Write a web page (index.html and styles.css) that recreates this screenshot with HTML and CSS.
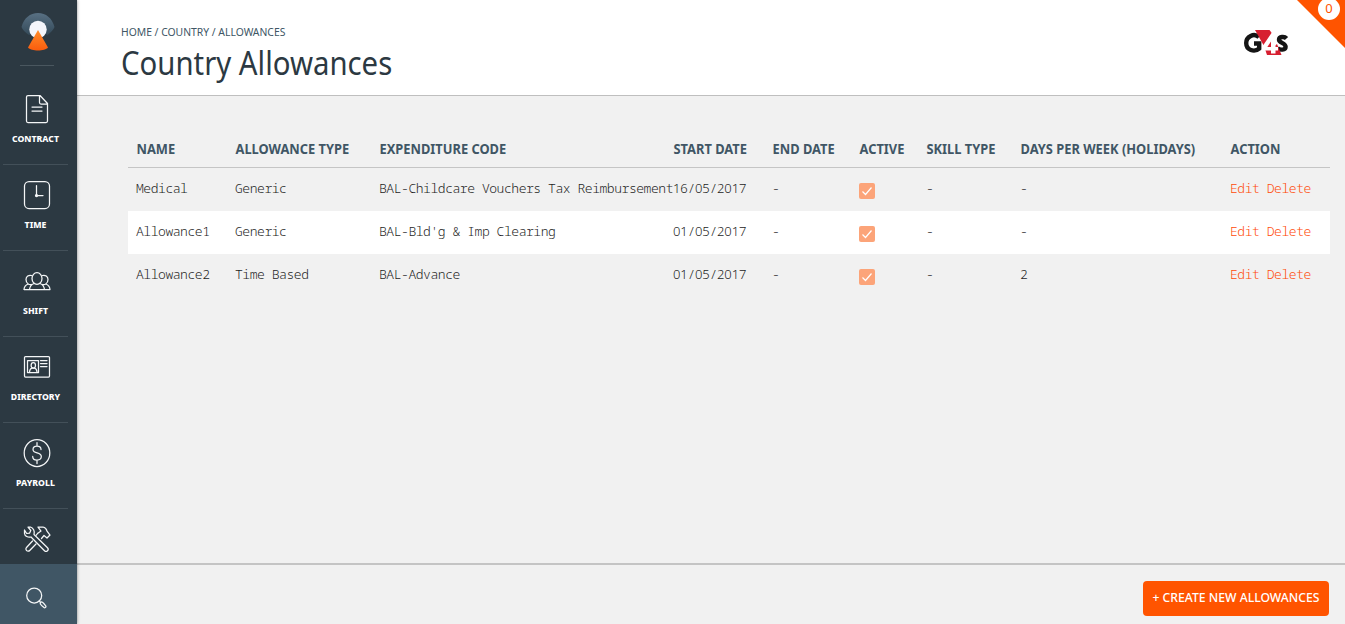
FILE: index.html
```html
<!DOCTYPE html>
<html lang="en">
<head>
<meta charset="utf-8">
<title>Country Allowances</title>
<link rel="stylesheet" href="styles.css">
</head>
<body>
<div class="app">
  <aside class="sidebar">
    <div class="brand">
      <svg width="34" height="38" viewBox="0 0 34 38">
        <defs>
          <linearGradient id="dome" x1="0" y1="0" x2="0" y2="1"><stop offset="0" stop-color="#587083"/><stop offset="1" stop-color="#344a59"/></linearGradient>
          <linearGradient id="beam" x1="0" y1="0" x2="0" y2="1"><stop offset="0" stop-color="#ff8d2b"/><stop offset="1" stop-color="#f95c0d"/></linearGradient>
        </defs>
        <path d="M.5 14C3 5 9 0 17 0s14 5 16.500 14c-1 3-3.500 5-7 8L17 17l-9 5C4 19 1.500 17 .5 14z" fill="url(#dome)"/>
        <circle cx="17" cy="16.500" r="8.700" fill="#f4f6fb"/>
        <path d="M17 17l10 17.500C24 38.500 10 38.500 7 34.500z" fill="url(#beam)"/>
      </svg>
    </div>
    <nav class="nav">
      <a class="nav-item">
        <svg class="icon" width="28" height="30" viewBox="0 0 28 30"><path d="M5.500 1.500H17l7.500 8V27a1.500 1.500 0 0 1-1.500 1.500H5A1.500 1.500 0 0 1 3.500 27V3A1.500 1.500 0 0 1 5 1.500zM16.500 2v6.500a1.500 1.500 0 0 0 1.500 1.500h6M9 13h10M9 17h10"/></svg>
        <span class="label">CONTRACT</span>
      </a>
      <a class="nav-item">
        <svg class="icon" width="28" height="30" viewBox="0 0 28 30"><rect x="1.500" y="1.500" width="25" height="27" rx="4.500"/><path d="M13.500 5.500v10H20"/><circle cx="13.500" cy="15.500" r="1" fill="#fff"/></svg>
        <span class="label">TIME</span>
      </a>
      <a class="nav-item">
        <svg class="icon" width="28" height="30" viewBox="0 0 28 30"><ellipse cx="14" cy="12.500" rx="5" ry="5.800"/><path d="M8.500 9.500a4.200 4.200 0 0 0-5.500 4c0 2 1 3.700 2.200 4.500C2.500 19 1.200 20.500 1 23.500h26c-.2-3-1.500-4.500-4.200-5.500 1.200-.8 2.200-2.500 2.200-4.500a4.200 4.200 0 0 0-5.500-4M11 17.500c-3 1-4 2.500-4.500 6M17 17.500c3 1 4 2.500 4.500 6M5.200 18c1 .7 2 .8 3.300.5M22.800 18c-1 .7-2 .8-3.300.5"/></svg>
        <span class="label">SHIFT</span>
      </a>
      <a class="nav-item">
        <svg class="icon" width="28" height="30" viewBox="0 0 28 30"><rect x="1.500" y="4.500" width="25" height="20.500" rx="1"/><rect x="4.500" y="8.500" width="11" height="12"/><path d="M17.500 8.500h6.500M17.500 11.500h6.500M17.500 14.500h6.500M6.500 20c.2-2.500 1.200-3.500 2.500-3.800h2.500c1.300.3 2.300 1.300 2.500 3.800"/><ellipse cx="10.300" cy="13.300" rx="2.200" ry="2.800"/></svg>
        <span class="label">DIRECTORY</span>
      </a>
      <a class="nav-item">
        <svg class="icon" width="28" height="30" viewBox="0 0 28 30"><ellipse cx="14" cy="15" rx="12.800" ry="13.500"/><path d="M18 11.500c0-2-1.700-3.500-4-3.500s-4 1.300-4 3.500c0 4.700 8.300 2.200 8.300 7 0 2.200-1.900 3.500-4.300 3.500s-4.300-1.400-4.300-3.600M14 4.500V8M14 22v3.500"/></svg>
        <span class="label">PAYROLL</span>
      </a>
      <a class="nav-item last">
        <svg class="icon" width="28" height="30" viewBox="0 0 28 30"><path d="M1.500 6v3.500c.3 2.700 3.500 4.300 6.500 3.500l13.500 13.700a2 2 0 0 0 3-3L11 10.500c1-3-.5-6.500-3.500-7.500H5l2.800 3.500-1.300 2.700-2.800.3z"/><path d="M14.500 9.500L18 7l-3-4h5c2.500.5 3.500 2 4 4l3 4-3 3-3-2.500-2.500 3M14.500 9.500l-1.200 1.700M9.500 17l-6 6.500a2 2 0 0 0 3.200 3L13 20"/></svg>
      </a>
    </nav>
    <a class="search">
      <svg class="icon" width="22" height="24" viewBox="0 0 22 24"><circle cx="9.200" cy="9.500" r="7.500"/><path d="M14.200 15l1.600 1.600"/><path d="M15.700 16.200c1-.8 2-.3 5 3.600.8 1.200-.8 2.500-1.700 1.700-3.700-3-4.400-4-3.300-5.300z"/></svg>
    </a>
  </aside>
  <main class="main">
    <header class="header">
      <div>
        <div class="crumbs">HOME / COUNTRY / ALLOWANCES</div>
        <h1 class="title">Country Allowances</h1>
      </div>
      <svg class="logo" width="46" height="28" viewBox="0 0 46 28">
        <path d="M16 8.200C11 3.500 3.200 7.500 3.200 14c0 7 8 9.800 13 5.500V14.500H11" fill="none" stroke="#151515" stroke-width="4.400"/>
        <path d="M43.500 9.500c-2-2.300-7.500-2-7.500 1.300 0 3.200 6.600 3 6.600 6.900 0 3.700-5.600 3.600-8.100 1.500" fill="none" stroke="#151515" stroke-width="4.400"/>
        <path d="M12 1h14.500L31 7l-10 10z" fill="#d71f30"/>
        <path d="M22 20h6l6-5 4.500 11H24z" fill="#d71f30"/>
        <path d="M32.500 4v14h2.500v3.500h-2.500v3h-4.500v-3h-9V18l9.500-14z" fill="#fff"/>
        <path d="M28 12.500L24.300 18H28z" fill="#d71f30"/>
      </svg>
      <div class="corner"></div><span class="count">0</span>
    </header>
    <section class="content">
      <div class="row head"><span>NAME</span><span>ALLOWANCE TYPE</span><span>EXPENDITURE CODE</span><span>START DATE</span><span>END DATE</span><span>ACTIVE</span><span>SKILL TYPE</span><span>DAYS PER WEEK (HOLIDAYS)</span><span>ACTION</span></div>
      <div class="row"><span>Medical</span><span>Generic</span><span>BAL-Childcare Vouchers Tax Reimbursement</span><span class="date">16<b>/</b>05<b>/</b>2017</span><span>-</span><i class="check"><svg width="16" height="16"><path d="M3.500 8.500l3 3 6-7"/></svg></i><span>-</span><span>-</span><span class="links"><a>Edit</a> <a>Delete</a></span></div>
      <div class="row white"><span>Allowance1</span><span>Generic</span><span>BAL-Bld'g &amp; Imp Clearing</span><span class="date">01<b>/</b>05<b>/</b>2017</span><span>-</span><i class="check"><svg width="16" height="16"><path d="M3.500 8.500l3 3 6-7"/></svg></i><span>-</span><span>-</span><span class="links"><a>Edit</a> <a>Delete</a></span></div>
      <div class="row"><span>Allowance2</span><span>Time Based</span><span>BAL-Advance</span><span class="date">01<b>/</b>05<b>/</b>2017</span><span>-</span><i class="check"><svg width="16" height="16"><path d="M3.500 8.500l3 3 6-7"/></svg></i><span>-</span><span>2</span><span class="links"><a>Edit</a> <a>Delete</a></span></div>
    </section>
    <footer class="footer"><button class="create">+ CREATE NEW ALLOWANCES</button></footer>
  </main>
</div>
</body>
</html>
```
FILE: styles.css
```css
* { box-sizing: border-box; }
body { margin: 0; font-family: "Noto Sans", sans-serif; background: #f1f1f1; }
.app { display: flex; height: 624px; overflow: hidden; }
.sidebar { width: 77px; flex: none; display: flex; flex-direction: column; background: #2c3942; box-shadow: 0 0 3px rgba(0,0,0,.45); z-index: 1; }
.brand { height: 66px; width: 34px; margin-left: 20px; padding: 13px 0 0 1px; border-bottom: 1px solid #4a575f; flex: none; }
.brand svg { display: block; }
.nav { flex: 1; display: flex; flex-direction: column; min-height: 0; padding: 13px 9px 0 3px; }
.nav-item { height: 86px; flex: none; display: flex; flex-direction: column; align-items: center; padding-top: 15px; border-bottom: 1px solid #435059; }
.nav-item.last { border: 0; }
.icon { fill: none; stroke: #f4f6f7; stroke-width: 1.25; stroke-linejoin: round; stroke-linecap: round; display: block; flex: none; margin-left: 3px; }
.label { font-size: 8.700px; font-weight: 800; line-height: 12px; margin-top: 9px; color: #fff; white-space: nowrap; }
.search { height: 60px; flex: none; background: #405665; padding: 22px 0 0 22px; }
.main { flex: 1; min-width: 0; display: flex; flex-direction: column; }
.header { height: 96px; flex: none; position: relative; background: #fff; border-bottom: 1px solid #bfbfbf; display: flex; justify-content: space-between; padding: 24px 56px 0 44px; }
.crumbs { font-size: 11px; line-height: 15px; color: #405665; white-space: nowrap; transform: scaleX(.942); transform-origin: left; }
.title { margin: 3px 0 0; font-size: 33px; font-weight: 400; line-height: 42px; color: #2c3942; white-space: nowrap; transform: scaleX(.889); transform-origin: left; }
.logo { margin-top: 5px; }
.corner { position: absolute; top: 0; right: 0; width: 48px; height: 48px; background: #ff5400; clip-path: polygon(0 0, 100% 0, 100% 100%); }
.count { position: absolute; top: -2px; right: 5px; width: 22px; height: 22px; border-radius: 50%; background: #fff; color: #ff5400; font-size: 13px; line-height: 21px; text-align: center; }
.content { flex: 1; padding: 35px 15px 0 51px; }
.row { display: grid; grid-template-columns: 99px 144px 294px 99px 87px 67px 94px 210px 1fr; padding-left: 8px; height: 43px; line-height: 40px; font-family: "Noto Sans Mono", "DejaVu Sans Mono", monospace; font-size: 13px; font-weight: 350; letter-spacing: -.45px; color: #1c1c1c; white-space: nowrap; }
.row.white { background: #fff; }
.row.head { height: 37px; line-height: 35px; border-bottom: 1px solid #c5c5c5; font-family: "Noto Sans", sans-serif; font-size: 14px; font-weight: 700; letter-spacing: 0; color: #405665; }
.row.head span { transform: translateX(.5px) scaleX(.918); transform-origin: left; justify-self: start; }
.date { font-family: "Noto Sans", sans-serif; font-size: 13px; font-weight: 350; letter-spacing: -.09px; }
.date b { display: inline-block; width: 7.350px; font-weight: 350; text-align: center; }
.check { width: 16px; height: 16px; margin-top: 15px; border-radius: 2px; background: #fca479; }
.check svg { display: block; fill: none; stroke: #fff; stroke-width: 1.2; }
.links { color: #ff4a08; }
.footer { height: 61px; flex: none; border-top: 2px solid #c4c4c4; display: flex; justify-content: flex-end; padding: 16px 16px 0 0; }
.create { width: 186px; height: 35px; border: 0; border-radius: 4px; background: #ff5400; color: #fff; font-family: "Noto Sans", sans-serif; font-size: 12.200px; font-weight: 500; padding: 0 0 2px; white-space: nowrap; }
```
